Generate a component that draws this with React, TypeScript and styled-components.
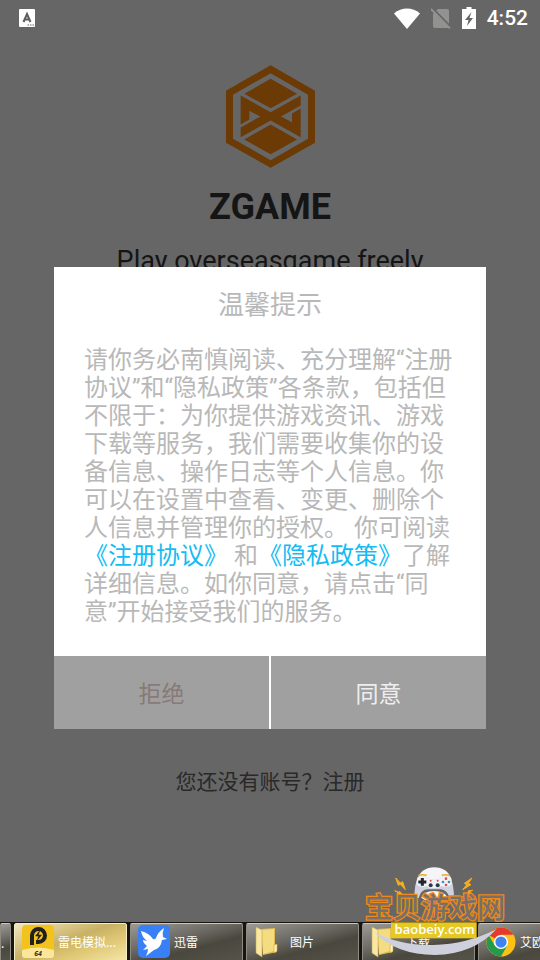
import React from "react";
import styled, { createGlobalStyle, css } from "styled-components";

const GlobalStyle = createGlobalStyle`
  *, *::before, *::after { box-sizing: border-box; }
  html, body, #root { height: 100%; }
  body {
    margin: 0;
    background: #666666;
    font-family: Roboto, "Noto Sans CJK SC", sans-serif;
  }
`;

const Screen = styled.div`
  position: relative;
  min-height: 100%;
  display: flex;
  flex-direction: column;
  overflow: hidden;
  background: #666666;
`;

const StatusBar = styled.header`
  height: 36px;
  padding: 0 12px 0 19px;
  display: flex;
  align-items: center;
  justify-content: space-between;
  color: #ffffff;
`;

const StatusIcons = styled.div`
  display: flex;
  align-items: center;
  gap: 11px;
`;

const Clock = styled.time`
  font-size: 21px;
  line-height: 24px;
  font-weight: 500;
`;

const Welcome = styled.main`
  flex: 1;
  display: flex;
  flex-direction: column;
  align-items: center;
  padding-top: 29px;
  color: #151515;
`;

const BrandName = styled.h1`
  margin: 18px 0 0;
  font-size: 36px;
  line-height: 42px;
  font-weight: 700;
`;

const Tagline = styled.p`
  margin: 17px 0 0;
  font-size: 27px;
  line-height: 32px;
`;

const SignUpLink = styled.a`
  margin-top: auto;
  margin-bottom: 124px;
  font-size: 21px;
  line-height: 32px;
  color: #292929;
  text-decoration: none;
`;

const Overlay = styled.div`
  position: absolute;
  inset: 36px 0 0;
  display: flex;
  align-items: center;
  justify-content: center;
`;

const Dialog = styled.section`
  width: 80%;
  background: #ffffff;
  color: #b8b8b8;
`;

const DialogTitle = styled.h2`
  margin: 0;
  padding-top: 18px;
  font-size: 26px;
  line-height: 40px;
  font-weight: 400;
  text-align: center;
`;

const DialogText = styled.p`
  margin: 0;
  padding: 21px 30px 30px;
  font-size: 24px;
  line-height: 28px;
`;

const PolicyLink = styled.a`
  color: #12bcf4;
  text-decoration: none;
`;

const DialogActions = styled.div`
  display: grid;
  grid-template-columns: 1fr 1fr;
  gap: 2px;
`;

const ActionButton = styled.button<{ $primary?: boolean }>`
  height: 73px;
  padding: 0 0 2px;
  border: 0;
  background: #a0a0a0;
  color: ${(p) => (p.$primary ? "#eeeeee" : "#877a78")};
  font: inherit;
  font-size: 23px;
`;

const Taskbar = styled.nav`
  height: 38px;
  display: flex;
  gap: 3px;
  overflow: hidden;
  background: #16150f;
  border-top: 1px solid #16150f;
`;

const Task = styled.button<{ $active?: boolean; $stub?: boolean }>`
  flex: 0 0 ${(p) => (p.$stub ? 11 : 113)}px;
  height: 40px;
  display: flex;
  align-items: center;
  gap: 4px;
  padding: ${(p) => (p.$stub ? "0" : "0 0 3px 7px")};
  overflow: hidden;
  border: 1px solid #8d8b84;
  border-top-color: #c9c8c3;
  border-radius: 2px;
  background: linear-gradient(165deg, #9b9a96 0%, #6d6b64 38%, #4a473e 62%, #57544a 100%);
  color: #ffffff;
  font-family: "Noto Sans CJK SC", sans-serif;
  font-size: 12px;
  line-height: 20px;
  white-space: nowrap;
  ${(p) =>
    p.$active &&
    css`
      border-color: #f7edc4;
      background: linear-gradient(160deg, #efe6c2 0%, #c9b164 45%, #e2cb78 70%, #f5e8ae 100%);
    `}
`;

const TaskLabel = styled.span<{ $inset?: boolean }>`
  padding-left: ${(p) => (p.$inset ? 6 : 0)}px;
`;

const Watermark = styled.svg`
  position: absolute;
  right: 31px;
  bottom: 3px;
  pointer-events: none;
`;

const WatermarkTitle = styled.text`
  font-family: "Noto Sans CJK SC", sans-serif;
  font-size: 84px;
  font-weight: 500;
  fill: #77706a;
  stroke: #ee871c;
  stroke-width: 8px;
  paint-order: stroke;
`;

const KeyboardIcon = () => (
  <svg width="16" height="18" viewBox="0 0 16 18" aria-hidden="true">
    <rect width="16" height="18" rx="1" fill="#fff" />
    <path d="M4.500 13 8 5l3.500 8M6 10.500h4" fill="none" stroke="#5c5c5c" strokeWidth="2" />
    <path d="M8.500 16h1.500m1 0h1.500m1 0H15" stroke="#666" strokeWidth="1.200" />
  </svg>
);

const WifiIcon = () => (
  <svg width="26" height="21" viewBox="0 0 26 21" aria-hidden="true">
    <path d="M0 5.500C7.500-1.200 18.500-1.200 26 5.500L13 21Z" fill="#fff" />
  </svg>
);

const NoSimIcon = () => (
  <svg width="20" height="21" viewBox="0 0 20 21" aria-hidden="true">
    <path d="M7 1h9q2 0 2 2v16q0 1-1 1H4q-2 0-2-2V6Z" fill="#929390" />
    <path d="M1 0 20 19.500" stroke="#666" strokeWidth="2.500" />
    <path d="M0 1 19 20.500" stroke="#929390" strokeWidth="1.800" />
  </svg>
);

const BatteryIcon = () => (
  <svg width="14" height="22" viewBox="0 0 14 22" aria-hidden="true">
    <path d="M4.500 0h5v2H14v20H0V2h4.500Z" fill="#fff" />
    <path d="M9.500 5 3 13h3.500L5 19l6-8H7.500Z" fill="#666" />
  </svg>
);

const BrandLogo = () => (
  <svg width="89" height="103" viewBox="75 30 267 308" role="img" aria-label="ZGAME">
    <g fill="#6b3a05">
      <path
        fillRule="evenodd"
        d="M209 30 342 107V263L209 338 75 263V107ZM209 54 96 119V251L209 315 321 251V119Z"
      />
      <path d="M209 71 288 116 209 159 130 116ZM209 208 288 253 209 297 130 253Z" />
      <path d="M119 121 209 171 299 121V151L240 184 273 201V175L299 160V246L209 196 119 246V217L178 184 145 167V193L119 208Z" />
    </g>
  </svg>
);

const EmulatorIcon = () => (
  <svg width="32" height="34" viewBox="0 0 32 34" aria-hidden="true">
    <rect width="32" height="33" rx="4" fill="#f2c21d" />
    <path d="M0 25q16-5 32 0v5q0 3-3 3H3q-3 0-3-3Z" fill="#fae79b" />
    <path d="M10 20v-9.500A6.500 6.500 0 1 1 16.500 17H14" fill="none" stroke="#222018" strokeWidth="4" />
    <path d="m17.500 6-4 5h3l-1 4 4-5h-3Z" fill="#222018" stroke="#222018" strokeWidth=".5" />
    <text x="16" y="31" textAnchor="middle" fontFamily="Open Sans" fontSize="7" fontStyle="italic" fontWeight="700" fill="#3a3420">64</text>
  </svg>
);

const BirdIcon = () => (
  <svg width="32" height="33" viewBox="0 0 32 33" aria-hidden="true">
    <rect width="32" height="33" rx="5" fill="#397ff5" />
    <path d="M3 6q8 2 12 8 2 1 3-1 2-6 8-10-2 5-1 9l4 2-5 1q-1 8-8 10l-8 6q2-4 2-7l-5 1 4-4q-4-3-4-6l4 1Q4 12 3 6Z" fill="#fff" />
  </svg>
);

const FolderIcon = () => (
  <svg width="26" height="33" viewBox="0 0 26 33" aria-hidden="true">
    <path d="m7 4 14-1v19l2-3v8L9 30Z" fill="#dfbd50" />
    <path d="m8 5 12-1v22L9 29Z" fill="#f4dc82" />
    <path d="m2 2 6 3v27l-6-4Z" fill="#f8e8a6" stroke="#d2ad45" strokeWidth=".6" />
    <path d="m20 20 3-1v7l-3 2Z" fill="#fff0b2" stroke="#c9a43c" strokeWidth=".6" />
  </svg>
);

const ChromeIcon = () => (
  <svg width="30" height="30" viewBox="-16 -16 32 32" aria-hidden="true">
    <circle r="15.500" fill="#fbc116" />
    <path d="M0 0-13.400-7.700A15.500 15.500 0 0 1 13.400-7.700H0Z" fill="#e33b2e" />
    <path d="M-13.400-7.700A15.500 15.500 0 0 0 0 15.500L6.500 4 0 0-6.500 4Z" fill="#269a4c" />
    <circle r="7.500" fill="#fff" />
    <circle r="6" fill="#3f83f1" />
  </svg>
);

const SiteWatermark = () => (
  <Watermark width="144" height="94" viewBox="45 24 432 282" role="img" aria-label="宝贝游戏网">
    <path d="M202 72Q215 37 253 37T304 72L294 88H212Z" fill="#f5f5f7" />
    <path d="M202 68Q194 92 193 118 198 130 206 129 212 105 232 103H272Q292 105 299 129 308 130 312 118 310 90 303 68Q292 60 275 66L263 73H242L230 66Q213 60 202 68Z" fill="#cfd1e0" />
    <path d="M202 68Q213 60 230 66L242 73H263L275 66Q292 60 303 68L306 88Q292 101 275 93L265 99H240L230 93Q213 101 199 88Z" fill="#f0f0f5" />
    <path d="M214 128Q220 108 252 108T292 128L280 136H226Z" fill="#f5f5f7" />
    <path d="M205 62q10-5 25-1m45 0q12-4 25 1" fill="none" stroke="#e7ae2d" strokeWidth="5" />
    <path d="M217 69v23m-12-11h24" stroke="#20242c" strokeWidth="9" />
    <circle cx="242" cy="91" r="6" fill="#263c4a" />
    <circle cx="263" cy="91" r="6" fill="#263c4a" />
    <circle cx="242" cy="77" r="3" fill="#d94c5e" />
    <circle cx="263" cy="77" r="3" fill="#d94c5e" />
    <circle cx="288" cy="71" r="4" fill="#d94c5e" />
    <circle cx="288" cy="90" r="4" fill="#d94c5e" />
    <circle cx="279" cy="81" r="4" fill="#3b91af" />
    <circle cx="297" cy="81" r="4" fill="#3b91af" />
    <path
      d="M137 69 145 91 151 88 166 104 158 80 151 84ZM134 107 143 112 141 115 157 118 149 109 147 112ZM366 69 343 85 350 89 338 104 363 89 355 85ZM368 106 354 108 357 112 345 118 363 113 359 109Z"
      fill="#f5ad20"
      stroke="#f5ad20"
      strokeWidth="3"
    />
    <WatermarkTitle x="45" y="190">宝贝游戏网</WatermarkTitle>
    <path d="M72 232Q150 272 250 270 350 268 440 222 370 298 255 300 140 300 72 232Z" fill="#cfd0de" />
    <rect x="123" y="202" width="257" height="48" fill="#e6c823" />
    <text x="254" y="238" textAnchor="middle" fontFamily="Open Sans" fontSize="39" fontWeight="600" fill="#fff">baobeiy.com</text>
  </Watermark>
);

export default function App() {
  return (
    <>
      <GlobalStyle />
      <Screen>
        <StatusBar>
          <KeyboardIcon />
          <StatusIcons>
            <WifiIcon />
            <NoSimIcon />
            <BatteryIcon />
            <Clock>4:52</Clock>
          </StatusIcons>
        </StatusBar>
        <Welcome>
          <BrandLogo />
          <BrandName>ZGAME</BrandName>
          <Tagline>Play overseasgame freely</Tagline>
          <SignUpLink href="#register">您还没有账号？注册</SignUpLink>
        </Welcome>
        <Overlay>
          <Dialog role="dialog" aria-modal="true" aria-labelledby="notice-title">
            <DialogTitle id="notice-title">温馨提示</DialogTitle>
            <DialogText>
              请你务必南慎阅读、充分理解“注册协议”和“隐私政策”各条款，包括但不限于：为你提供游戏资讯、游戏下载等服务，我们需要收集你的设备信息、操作日志等个人信息。你可以在设置中查看、变更、删除个人信息并管理你的授权。 你可阅读
              <PolicyLink href="#agreement">《注册协议》</PolicyLink> 和
              <PolicyLink href="#privacy">《隐私政策》</PolicyLink>
              了解详细信息。如你同意，请点击“同意”开始接受我们的服务。
            </DialogText>
            <DialogActions>
              <ActionButton type="button">拒绝</ActionButton>
              <ActionButton type="button" $primary>同意</ActionButton>
            </DialogActions>
          </Dialog>
        </Overlay>
        <Taskbar>
          <Task type="button" $stub>.</Task>
          <Task type="button" $active><EmulatorIcon /><TaskLabel>雷电模拟...</TaskLabel></Task>
          <Task type="button"><BirdIcon /><TaskLabel>迅雷</TaskLabel></Task>
          <Task type="button"><FolderIcon /><TaskLabel $inset>图片</TaskLabel></Task>
          <Task type="button"><FolderIcon /><TaskLabel $inset>下载</TaskLabel></Task>
          <Task type="button"><ChromeIcon /><TaskLabel>艾欧</TaskLabel></Task>
        </Taskbar>
        <SiteWatermark />
      </Screen>
    </>
  );
}
